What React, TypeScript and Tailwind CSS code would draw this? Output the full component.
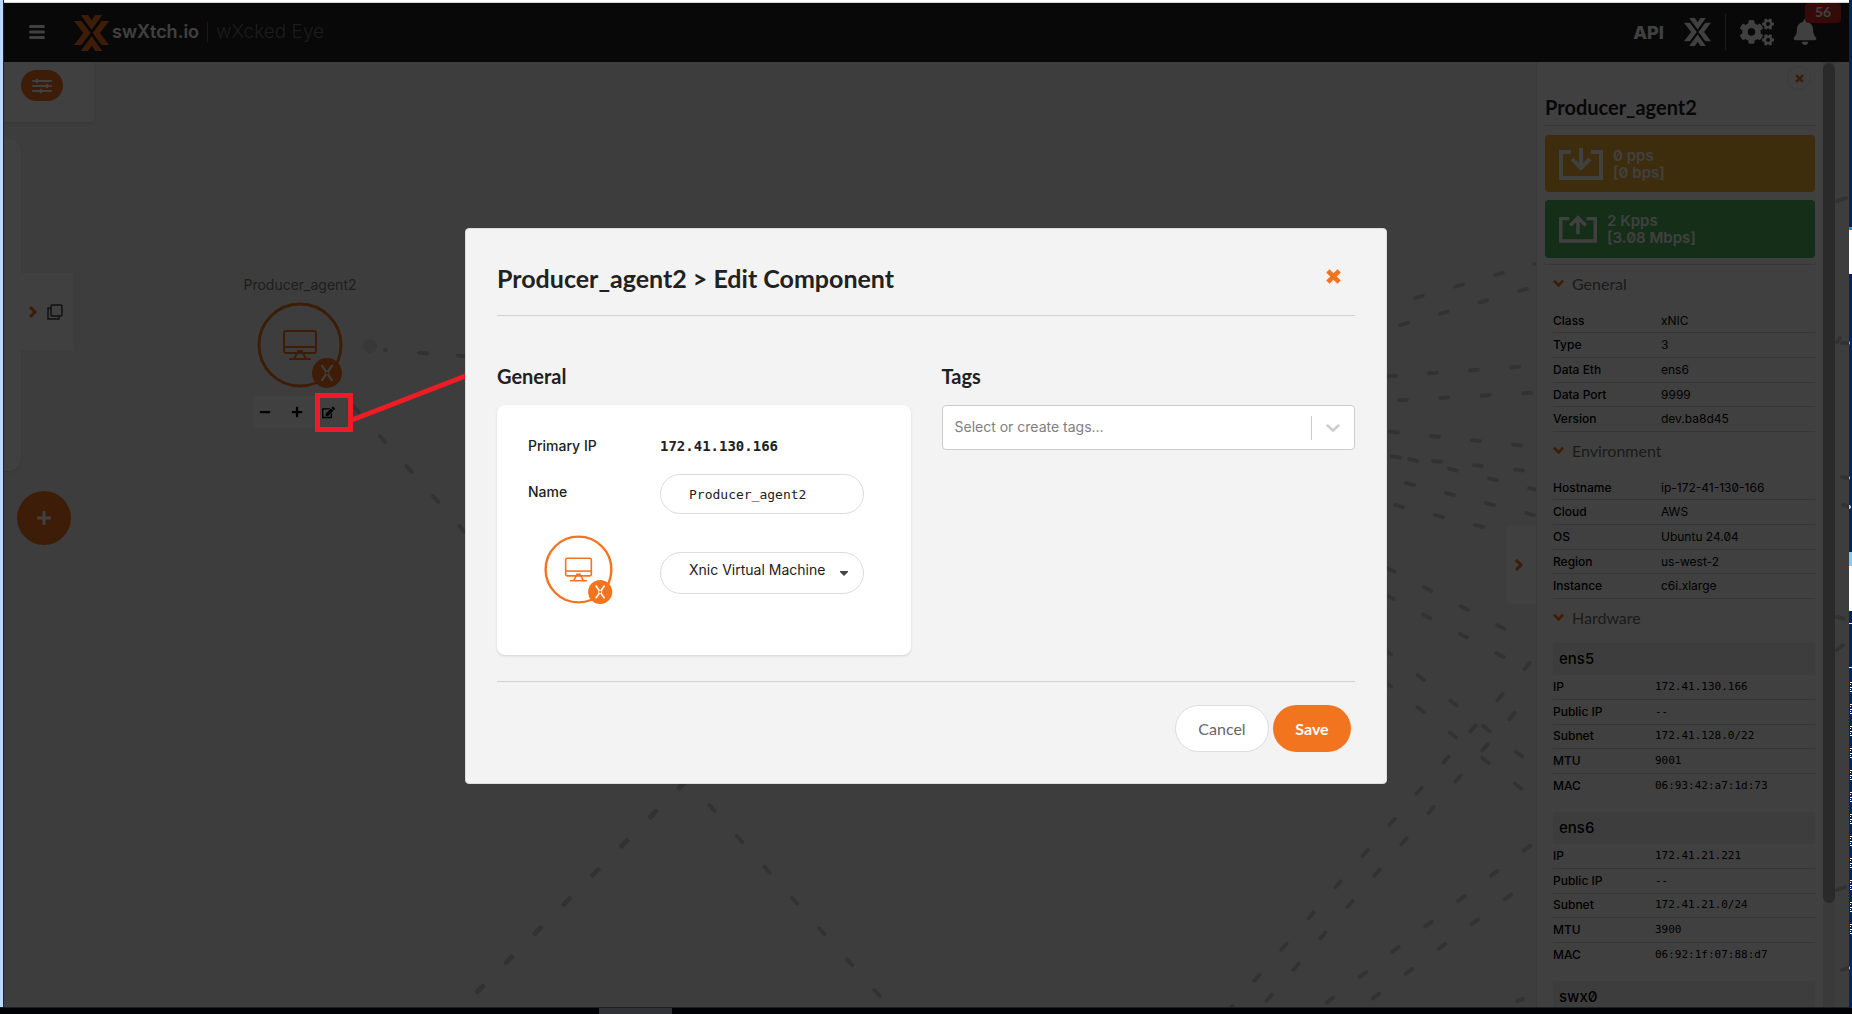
import { useState } from 'react';
import { FaBell, FaCogs, FaEdit, FaMinus, FaPlus } from 'react-icons/fa';

// [first x, first y, last x, last y, number of dashes]
const links = [
    [423, 353, 462, 356, 2],
    [356, 409, 462, 529, 5],
    [712, 808, 877, 993, 7],
    [1419, 297, 1499, 274, 3],
    [1404, 324, 1523, 290, 4],
    [1392, 376, 1515, 367, 4],
    [1403, 400, 1527, 393, 4],
    [1394, 432, 1517, 445, 4],
    [1396, 457, 1519, 470, 4],
    [1413, 460, 1533, 489, 4],
    [1410, 484, 1530, 514, 4],
    [1399, 506, 1479, 526, 3],
    [1391, 570, 1501, 627, 4],
    [1390, 597, 1500, 655, 4],
    [1388, 652, 1519, 754, 5],
    [1388, 684, 1518, 786, 5],
    [1527, 666, 1230, 1009, 12],
    [1512, 716, 1269, 998, 10],
    [1527, 848, 1330, 1000, 7],
    [1508, 897, 1376, 996, 5],
];

// short pieces that show between the side panel and the window edge
const strays = [
    'M1837 201l9-3',
    'M1837 342l3-4',
    'M1842 343h6',
    'M1842 477l6 1',
    'M1843 505l6 2',
    'M1837 617l7 2',
    'M1837 650l6-5',
    'M1837 890l8-3',
    'M1842 970l6-2',
    'M1517 1001l6-2',
    'M1534 264h1',
    'M385 350h1',
];

const uplink = [682, 785, 480, 989, 8];

const general = [
    ['Class', 'xNIC'],
    ['Type', '3'],
    ['Data Eth', 'ens6'],
    ['Data Port', '9999'],
    ['Version', 'dev.ba8d45'],
];

const environment = [
    ['Hostname', 'ip-172-41-130-166'],
    ['Cloud', 'AWS'],
    ['OS', 'Ubuntu 24.04'],
    ['Region', 'us-west-2'],
    ['Instance', 'c6i.xlarge'],
];

const interfaces = [
    {
        name: 'ens5',
        rows: [
            ['IP', '172.41.130.166'],
            ['Public IP', '--'],
            ['Subnet', '172.41.128.0/22'],
            ['MTU', '9001'],
            ['MAC', '06:93:42:a7:1d:73'],
        ],
    },
    {
        name: 'ens6',
        rows: [
            ['IP', '172.41.21.221'],
            ['Public IP', '--'],
            ['Subnet', '172.41.21.0/24'],
            ['MTU', '3900'],
            ['MAC', '06:92:1f:07:88:d7'],
        ],
    },
];

function dashes(link: number[]) {
    const [x1, y1, x2, y2, count] = link;
    const length = Math.hypot(x2 - x1, y2 - y1);
    const dx = ((x2 - x1) / length) * 4;
    const dy = ((y2 - y1) / length) * 4;
    return Array.from({ length: count }, (_, i) => {
        const x = x1 + ((x2 - x1) * i) / (count - 1);
        const y = y1 + ((y2 - y1) * i) / (count - 1);
        return `M${x - dx} ${y - dy}L${x + dx} ${y + dy}`;
    }).join('');
}

function Cross({ className }: { className: string }) {
    return (
        <svg viewBox="0 0 16 16" className={className} stroke="#f3741f" strokeWidth="5" aria-hidden="true">
            <path d="M2 2l12 12M14 2L2 14" />
        </svg>
    );
}

function Chevron({ down, className }: { down?: boolean; className: string }) {
    return (
        <svg viewBox="0 0 12 12" className={className} fill="none" stroke="#f3741f" strokeWidth="3" aria-hidden="true">
            <path d={down ? 'M1 3l5 5 5-5' : 'M3 1l5 5-5 5'} />
        </svg>
    );
}

function LogoMark({ className }: { className: string }) {
    return (
        <svg viewBox="0 0 105 108" className={className} fill="currentColor" aria-hidden="true">
            <path d="M0 18h22l28 36-28 36H0l28-36z" />
            <path d="M105 18H83L56 54l27 36h22L78 54z" />
            <path d="M20 0h22l11 16L64 0h21L53 44z" />
            <path d="M20 108h22l11-16 11 16h21L53 64z" />
        </svg>
    );
}

function MachineIcon({ className }: { className: string }) {
    return (
        <svg viewBox="0 0 86 86" className={className} fill="none" aria-hidden="true">
            <circle cx="43" cy="43" r="41" stroke="#f3741f" strokeWidth="3" />
            <g stroke="#f3741f" strokeWidth="2">
                <rect x="27" y="29" width="32" height="22" rx="2" />
                <path d="M27 45h32" />
                <path d="M40 51l-3 6M46 51l3 6M40 49h6" />
                <path d="M33 57h20" strokeLinecap="round" />
            </g>
            <circle cx="70" cy="71" r="15" fill="#f3741f" />
            <path
                d="M64.500 63l4.500 6.500M75.500 63L71 69.500M64.500 79l4.500-6.500M75.500 79L71 72.500"
                stroke="#fff"
                strokeWidth="2"
            />
            <circle cx="70" cy="71" r="2" stroke="#fff" strokeWidth="1" />
        </svg>
    );
}

function TrafficCard({ up, color, rate, size }: { up?: boolean; color: string; rate: string; size: string }) {
    return (
        <div className={`flex items-center gap-2.5 rounded px-3.5 ${color}`}>
            <svg
                viewBox="0 0 44 32"
                className={up ? 'h-7 w-[38px]' : 'h-8 w-11'}
                fill="none"
                stroke="#fff"
                strokeWidth="4"
                aria-hidden="true"
            >
                <path d="M12 4H2v26h40V4H32" />
                <path d={up ? 'M22 22V3M13 12l9-9 9 9' : 'M22 0v19M13 11l9 9 9-9'} />
            </svg>
            <p className="text-[15px] leading-[17px] font-semibold text-white slashed-zero">
                {rate}
                <br />[{size}]
            </p>
        </div>
    );
}

function SectionTitle({ children }: { children: string }) {
    return (
        <h3 className="flex h-11 gap-2 px-2 pt-[7px] font-[Lato] text-base leading-6 text-[#6b6b6b]">
            <Chevron down className="mt-1.5 size-[11px]" />
            {children}
        </h3>
    );
}

function DetailTable({ label, rows, mono }: { label: string; rows: string[][]; mono?: boolean }) {
    return (
        <table aria-label={label} className="ml-2 h-[123px] w-[262px] text-left text-xs leading-4 text-black slashed-zero">
            <tbody>
                {rows.map(([name, value]) => (
                    <tr key={name} className={mono ? 'border-b border-gray-300 last:border-0' : 'border-b border-gray-300'}>
                        <th scope="row" className={mono ? 'w-[102px] font-medium' : 'w-[108px] font-medium'}>
                            {name}
                        </th>
                        <td className={mono ? "font-['DejaVu_Sans_Mono',monospace] text-[11px]" : ''}>{value}</td>
                    </tr>
                ))}
            </tbody>
        </table>
    );
}

function Header() {
    return (
        <header className="relative flex h-[59px] shrink-0 items-center bg-[#202020] pr-[31px] pb-0.5 pl-[25px] text-white">
            <button aria-label="Menu" className="mr-[29px]">
                <svg viewBox="0 0 16 14" className="h-3.5 w-4" stroke="currentColor" strokeWidth="3" strokeLinecap="round">
                    <path d="M1.500 1.500h13M1.500 7h13M1.500 12.500h13" />
                </svg>
            </button>
            <LogoMark className="mt-0.5 h-9 w-[35px] text-[#f3741f]" />
            <span className="ml-[3px] text-lg leading-6 font-semibold">swXtch.io</span>
            <span className="ml-2 h-5 w-px bg-[#606060]" />
            <span className="ml-2 text-[19px] leading-6 font-light text-[#707070]">wXcked Eye</span>
            <a href="#api" className="ml-auto pt-0.5 text-lg leading-6 font-extrabold">
                API
            </a>
            <LogoMark className="ml-5 h-7 w-[27px]" />
            <span className="ml-3.5 h-9 w-px bg-[#707070]" />
            <button aria-label="Settings" className="ml-3.5">
                <FaCogs className="size-[34px]" />
            </button>
            <button aria-label="Notifications" className="ml-[18px]">
                <FaBell className="size-[26px]" />
            </button>
            <span className="absolute top-0 right-2 h-5 w-9 rounded bg-[#db2828] text-center font-[Lato] text-sm leading-[18px] font-bold">
                56
            </span>
        </header>
    );
}

function SidePanel() {
    return (
        <aside className="flex w-[299px] shrink-0 overflow-hidden border-l border-gray-200 bg-white">
            <div className="flex-1 px-2">
                <div className="flex h-[30px] justify-end pt-1 pr-1">
                    <button aria-label="Close panel" className="grid size-6 place-items-center rounded-full border border-gray-200">
                        <Cross className="size-[9px]" />
                    </button>
                </div>
                <h2 className="h-[34px] border-b border-gray-300 font-[Lato] text-xl leading-[30px] font-bold text-[#1f1f1f]">
                    Producer_agent2
                </h2>
                <div className="grid grid-rows-[57px_58px] gap-2 border-b border-gray-300 pt-[9px] pb-1.5">
                    <TrafficCard color="bg-[#f2b233]" rate="0 pps" size="0 bps" />
                    <TrafficCard up color="bg-[#54b860]" rate="2 Kpps" size="3.08 Mbps" />
                </div>
                <SectionTitle>General</SectionTitle>
                <DetailTable label="General" rows={general} />
                <SectionTitle>Environment</SectionTitle>
                <DetailTable label="Environment" rows={environment} />
                <SectionTitle>Hardware</SectionTitle>
                {interfaces.map((nic) => (
                    <div key={nic.name} className="pb-3.5">
                        <h4 className="ml-2 h-8 bg-[#f4f4f4] px-1.5 text-[15px] leading-8 font-medium text-black">{nic.name}</h4>
                        <DetailTable mono label={nic.name} rows={nic.rows} />
                    </div>
                ))}
                <h4 className="ml-2 h-8 bg-[#f4f4f4] px-1.5 text-[15px] leading-8 font-medium text-black slashed-zero">swx0</h4>
            </div>
            <div className="w-3 bg-[#e8e8e8] pt-px">
                <div className="h-[89%] rounded-full bg-[#a8a8a8]" />
            </div>
        </aside>
    );
}

function Workspace() {
    return (
        <main className="relative flex min-h-0 flex-1 justify-between">
            <div className="flex flex-col">
                <div className="h-[60px] w-[90px] bg-white pt-2 pl-[17px] shadow-sm">
                    <button aria-label="Filters" className="grid h-[31px] w-[42px] place-items-center rounded-full bg-[#f3741f]">
                        <svg viewBox="0 0 20 16" className="h-4 w-5" stroke="#fff" strokeWidth="2" strokeLinecap="round">
                            <path d="M1 3h18M1 8h18M1 13h18" />
                            <path d="M5 2v2M15 7v2M9 12v2" strokeWidth="2.500" />
                        </svg>
                    </button>
                </div>
                <div className="mt-[17px] flex">
                    <div className="h-[332px] w-[17px] rounded-r-xl bg-white shadow-sm" />
                    <button
                        aria-label="Open drawer"
                        className="mt-[134px] flex h-[77px] w-[52px] items-center gap-2 bg-white pl-1.5"
                    >
                        <Chevron className="size-3" />
                        <svg viewBox="0 0 16 16" className="size-4" fill="none" stroke="#444" strokeWidth="1.500">
                            <rect x="4" y="1" width="11" height="11" rx="1" />
                            <path d="M4 4H1v11h11v-3" />
                        </svg>
                    </button>
                </div>
                <button
                    aria-label="Add"
                    className="mt-5 ml-[13px] grid size-[54px] place-items-center rounded-full bg-[#f3741f] text-white"
                >
                    <FaPlus className="size-4" />
                </button>
            </div>

            <div className="absolute top-[213px] left-[236px] flex w-[120px] flex-col items-center">
                <p className="text-sm leading-5 text-[#777]">Producer_agent2</p>
                <MachineIcon className="mt-[7px] size-[86px]" />
                <div className="mt-2 flex h-8 w-[94px] items-center justify-between rounded bg-white pr-3 pl-1.5 text-black">
                    <button aria-label="Zoom out">
                        <FaMinus className="size-3" />
                    </button>
                    <button aria-label="Zoom in">
                        <FaPlus className="size-3" />
                    </button>
                    <button aria-label="Edit component">
                        <FaEdit className="size-[13px]" />
                    </button>
                </div>
            </div>

            <div className="relative mr-[14px] flex">
                <button
                    aria-label="Collapse panel"
                    className="mt-[464px] grid h-[78px] w-[29px] place-items-center rounded-l bg-white pr-1.5"
                >
                    <Chevron className="size-3" />
                </button>
                <SidePanel />
            </div>
        </main>
    );
}

function EditDialog() {
    const [name, setName] = useState('Producer_agent2');

    return (
        <div
            role="dialog"
            aria-labelledby="dialog-title"
            className="relative w-[922px] rounded border border-[#dcdcdc] bg-[#f3f3f3] px-[31px] text-[#212121]"
        >
            <div className="flex h-[87px] items-center justify-between border-b border-[#ced2d5] pt-3 pr-3.5">
                <h1 id="dialog-title" className="font-[Lato] text-[25px] leading-8 font-bold">
                    Producer_agent2 &gt; Edit Component
                </h1>
                <button aria-label="Close" className="pb-1">
                    <Cross className="size-[15px]" />
                </button>
            </div>

            <div className="grid grid-cols-2 gap-[31px] pt-11 pb-[26px]">
                <section>
                    <h2 className="mb-[13px] font-[Lato] text-xl leading-8 font-bold">General</h2>
                    <div className="grid h-[250px] grid-cols-[132px_204px] grid-rows-[20px_40px_82px] gap-y-[18px] rounded-lg bg-white px-[31px] py-[31px] text-sm leading-5 shadow">
                        <span className="font-medium">Primary IP</span>
                        <span className="font-['DejaVu_Sans_Mono',monospace] font-bold">172.41.130.166</span>
                        <label htmlFor="name" className="pt-2 font-medium">
                            Name
                        </label>
                        <input
                            id="name"
                            value={name}
                            onChange={(e) => setName(e.target.value)}
                            className="h-10 rounded-full border border-[#dcdcdc] bg-white px-7 font-['DejaVu_Sans_Mono',monospace] text-[13px]"
                        />
                        <MachineIcon className="mt-[3px] ml-4 size-[69px]" />
                        <div className="relative flex items-center">
                            <select
                                aria-label="Component type"
                                className="h-[42px] w-full appearance-none rounded-full border border-[#dcdcdc] bg-white pr-8 pb-1.5 pl-7 text-sm"
                            >
                                <option>Xnic Virtual Machine</option>
                            </select>
                            <svg viewBox="0 0 8 5" className="absolute right-4 h-[5px] w-2" fill="#444" aria-hidden="true">
                                <path d="M0 0h8v1L4 5 0 1z" />
                            </svg>
                        </div>
                    </div>
                </section>

                <section>
                    <h2 id="tags-title" className="mb-[13px] font-[Lato] text-xl leading-8 font-bold">
                        Tags
                    </h2>
                    <div className="flex h-[45px] items-center rounded border border-[#ccc] bg-white">
                        <input
                            aria-labelledby="tags-title"
                            placeholder="Select or create tags..."
                            className="min-w-0 flex-1 px-3 pb-0.5 text-sm placeholder:text-[#808080]"
                        />
                        <span className="h-6 w-px bg-[#ccc]" />
                        <button aria-label="Show tags" className="px-[14px]">
                            <svg viewBox="0 0 14 8" className="h-2 w-3.5" fill="none" stroke="#ccc" strokeWidth="2.500" strokeLinecap="round">
                                <path d="M1.500 1.500L7 6.500l5.500-5" />
                            </svg>
                        </button>
                    </div>
                </section>
            </div>

            <div className="flex justify-end gap-1 border-t border-[#ced2d5] pt-[23px] pr-1 pb-[31px] font-[Lato] text-base">
                <button className="h-[47px] w-[94px] rounded-full border border-[#dcdcdc] bg-white text-[#666]">Cancel</button>
                <button className="h-[47px] w-[78px] rounded-full bg-[#f3741f] font-bold text-white">Save</button>
            </div>
        </div>
    );
}

function WindowEdge() {
    return (
        <div className="flex w-[3px] shrink-0 flex-col overflow-hidden bg-[#00245e]">
            <div className="mt-[227px] h-[3px] bg-[#1e90ff]" />
            <div className="h-11 bg-white" />
            <div className="mt-[278px] h-3.5 bg-[#7ccdf8]" />
            <div className="h-[45px] bg-white" />
            <div className="mt-3 h-px bg-white" />
            <div className="mt-[43px] mb-3.5 h-px bg-white" />
            {Array.from({ length: 12 }, (_, i) => (
                <div key={i} className="mb-3 flex h-2.5 flex-col justify-between pl-px">
                    <i className="block h-px bg-white" />
                    <i className="block size-px bg-white" />
                    <i className="block h-px bg-white" />
                    <i className="block size-px bg-white" />
                    <i className="block h-px bg-white" />
                </div>
            ))}
        </div>
    );
}

export default function App() {
    return (
        <div className="relative flex h-screen flex-col overflow-hidden bg-[#f3f3f3] font-[Inter,sans-serif]">
            <svg className="absolute inset-0 size-full" fill="none" stroke="#c8c8c8" strokeWidth="4" strokeLinecap="round" aria-hidden="true">
                <path d={links.map(dashes).join('') + strays.join('')} />
                <path d={dashes(uplink)} strokeWidth="5" />
                <circle cx="370" cy="346" r="7" fill="#dedede" stroke="none" />
            </svg>

            <div className="flex min-h-0 flex-1">
                <div className="relative z-10 w-1 shrink-0 border-r border-[#14233c] bg-[#bcd8ff]" />
                <div className="relative flex min-w-0 flex-1 flex-col">
                    <div className="relative z-10 h-[3px] shrink-0 border-b border-[#d5d5d5] bg-white" />
                    <Header />
                    <Workspace />
                    <div className="absolute inset-0 bg-black/75" />
                </div>
                <WindowEdge />
            </div>

            <footer className="relative h-[7px] shrink-0 border-t border-[#1a2028] bg-[#000205] pl-[599px]">
                <div className="h-full w-[73px] bg-[#303237]" />
            </footer>

            {/* callout from the edit button to the dialog */}
            <svg className="absolute inset-0 size-full" fill="none" stroke="#ee1c24" strokeWidth="5" aria-hidden="true">
                <rect x="317.500" y="395.500" width="33" height="34" />
                <path d="M352 420L468 375" />
            </svg>

            <div className="absolute inset-x-0 top-[228px] flex justify-center">
                <EditDialog />
            </div>
        </div>
    );
}
